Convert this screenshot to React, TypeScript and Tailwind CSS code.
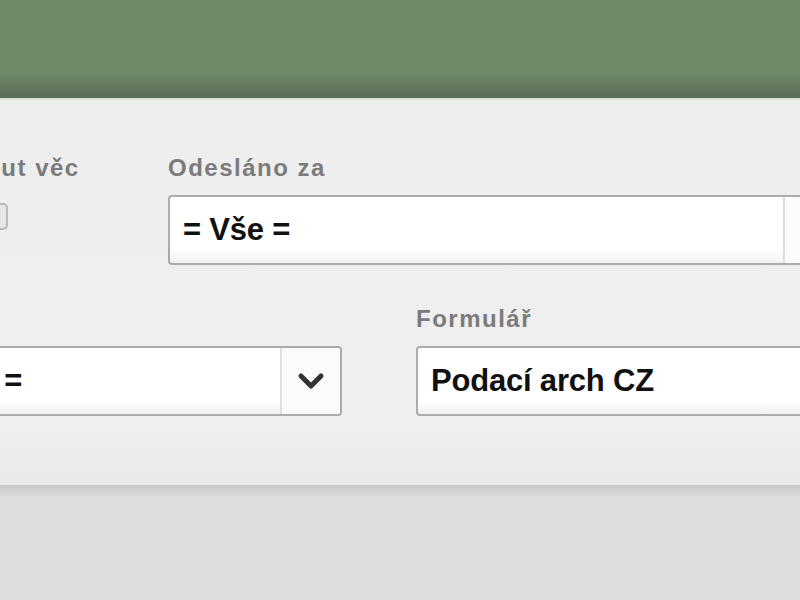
import { ChevronDown } from 'lucide-react'

const FONT = "font-['Liberation_Sans',Arial,sans-serif]"

function Label({ children, className = '' }: { children: React.ReactNode; className?: string }) {
  return (
    <p className={`text-[24px] leading-[28px] font-bold tracking-[1.5px] text-[#7b7b7b] mb-[13px] whitespace-nowrap ${className}`}>
      {children}
    </p>
  )
}

function Select({ value, className = '' }: { value: string; className?: string }) {
  return (
    <div
      className={`flex h-[70px] rounded-[4px] border-2 border-[#ababab] bg-[linear-gradient(to_bottom,#ffffff_0%,#ffffff_78%,#f1f1f1_100%)] overflow-hidden ${className}`}
    >
      <div className="flex-1 flex items-center pl-[13px] text-[31px] font-bold tracking-[-0.2px] text-[#111111] whitespace-nowrap">
        {value}
      </div>
      <div className="w-[60px] flex items-center justify-center border-l-2 border-[#dedede] bg-[#fbfbfb]">
        <ChevronDown size={40} strokeWidth={3} className="text-[#333333]" />
      </div>
    </div>
  )
}

export default function App() {
  return (
    <div className={`${FONT} w-[800px] h-[600px] overflow-hidden bg-[#dddddd]`}>
      {/* Header */}
      <div className="h-[100px] border-b-2 border-[#d9e3d3] bg-[linear-gradient(to_bottom,#6f8b6a_0%,#6f8b6a_72%,#5a6d56_100%)]" />

      {/* Filtry */}
      <div className="bg-[linear-gradient(to_bottom,#eeeeee_0%,#efefef_85%,#e9e9e9_100%)] pt-[54px] pb-[69px]">
        <div className="flex">
          <div className="ml-[-60px] w-[228px] flex-shrink-0">
            <Label className="ml-[-29px]">Zahrnout věc</Label>
            <div className="mt-[21px] ml-[40px] w-[28px] h-[27px] rounded-[5px] border-2 border-[#b9b9b9] bg-[#e6e6e6]" />
          </div>
          <div className="flex-shrink-0">
            <Label>Odesláno za</Label>
            <Select value="= Vše =" className="w-[677px]" />
          </div>
        </div>

        <div className="flex gap-[74px] mt-[40px]">
          <div className="ml-[-100px] flex-shrink-0">
            <Label>&nbsp;</Label>
            <Select value="= Vše =" className="w-[442px]" />
          </div>
          <div className="flex-shrink-0">
            <Label>Formulář</Label>
            <Select value="Podací arch CZ" className="w-[677px]" />
          </div>
        </div>
      </div>

      {/* Stín */}
      <div className="h-[12px] bg-[linear-gradient(to_bottom,#c8c8c8_0%,#dddddd_100%)]" />
    </div>
  )
}
